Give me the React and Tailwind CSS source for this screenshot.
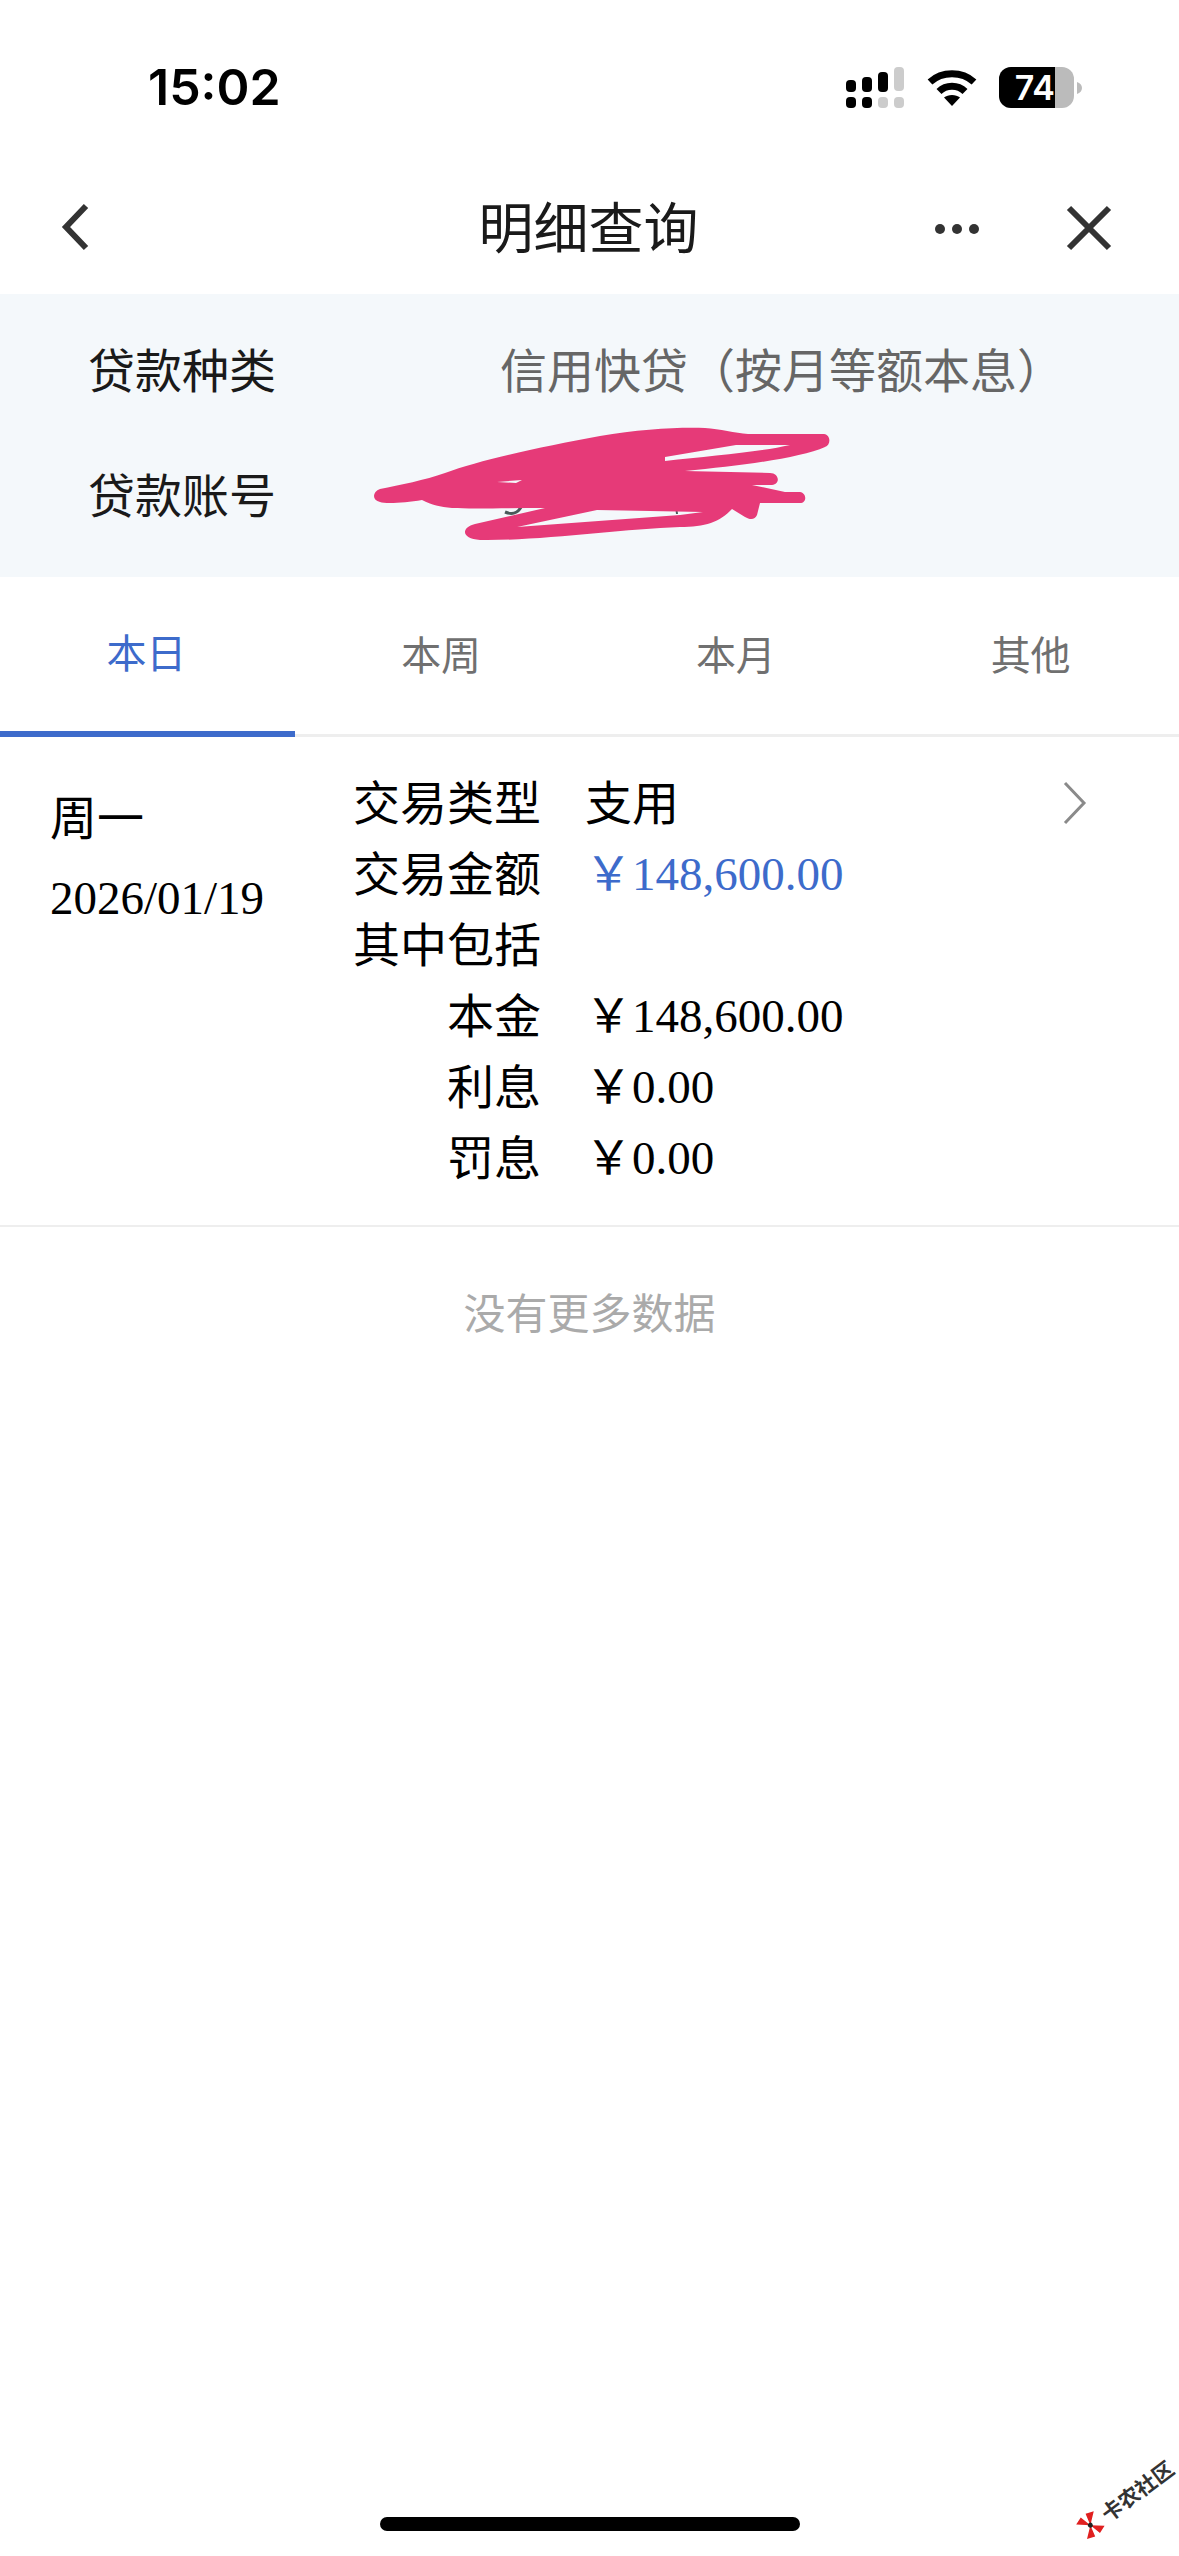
import React from 'react';

const cjk = { fontFamily: '"Noto Sans CJK SC", "Liberation Sans", sans-serif' };
const serif = { fontFamily: '"Liberation Serif", "Noto Sans CJK SC", serif' };

const tabs = ['本日', '本周', '本月', '其他'];

const details = [
  { label: '交易类型', value: '支用', plain: true },
  { label: '交易金额', value: '￥148,600.00', blue: true },
  { label: '其中包括', value: '' },
  { label: '本金', value: '￥148,600.00' },
  { label: '利息', value: '￥0.00' },
  { label: '罚息', value: '￥0.00' },
];

const SignalIcon = () => (
  <svg width="58" height="41" viewBox="0 0 58 41">
    <rect x="0" y="13" width="10" height="12" rx="4" fill="#000" />
    <rect x="16" y="10" width="10" height="15" rx="4" fill="#000" />
    <rect x="32" y="5" width="10" height="20" rx="4" fill="#000" />
    <rect x="48" y="0" width="10" height="24" rx="4" fill="#ccc" />
    <rect x="0" y="30" width="10" height="11" rx="4" fill="#000" />
    <rect x="16" y="30" width="10" height="11" rx="4" fill="#000" />
    <rect x="32" y="30" width="10" height="11" rx="4" fill="#ccc" />
    <rect x="48" y="30" width="10" height="11" rx="4" fill="#ccc" />
  </svg>
);

const WifiIcon = () => (
  <svg width="50" height="37" viewBox="0 0 50 37">
    <path d="M3 13 C15 2 35 2 47 13" fill="none" stroke="#000" strokeWidth="7" />
    <path d="M12 22.5 C19 15.5 31 15.5 38 22.5" fill="none" stroke="#000" strokeWidth="7" />
    <path d="M17 28.5 C21 25 29 25 33 28.5 L25 37 Z" fill="#000" />
  </svg>
);

const Battery = () => (
  <div className="flex items-center">
    <div className="relative w-[75px] h-[41px] rounded-[12px] overflow-hidden bg-[#bbbbbb]">
      <div className="w-[56px] h-full bg-black flex items-center justify-end">
        <span className="text-white text-[34px] font-semibold leading-none" style={{ fontFamily: 'Inter, sans-serif' }}>74</span>
      </div>
    </div>
    <svg className="ml-[3px]" width="5" height="12" viewBox="0 0 5 12">
      <path d="M0 0 C3 1 5 3 5 6 C5 9 3 11 0 12 Z" fill="#bbb" />
    </svg>
  </div>
);

const Scribble = () => (
  <svg className="absolute left-[340px] top-[106px]" width="520" height="160" viewBox="0 0 520 160">
    <path d="M165 112 C172 115 178 113 181 107" fill="none" stroke="#4a5a5a" strokeWidth="3" />
    <path d="M337 114 L336 106" fill="none" stroke="#4a5a5a" strokeWidth="2" />
    <path
      fillRule="evenodd"
      d="M40 89 C60 85 85 80 105 73 C140 60 200 47 260 36 C300 29 340 27 365 28 C380 29 395 33 408 34 L484 34 C491 35 491 45 485 47 C460 58 400 66 345 71 L430 73 C439 73 441 84 432 85 L412 85 L445 92 L460 92 C467 93 467 103 460 103 L420 103 L417 115 C415 120 410 120 405 117 L392 109 C380 122 365 127 340 127 C280 129 200 141 140 140 C122 139 120 128 135 124 L205 108 C170 108 130 109 112 108 C100 107 92 105 82 100 C65 103 45 104 40 102 C32 100 32 92 40 89 Z M325 57 L396 45 L450 45 C420 52 370 56 325 61 Z M157 82 L182 80 L176 83 Z M177 127 L257 110 L363 112 L340 115 Z"
      fill="#e63a78"
    />
  </svg>
);

export default function App() {
  return (
    <div className="relative w-[1179px] h-[2556px] bg-white text-black overflow-hidden flex flex-col" style={cjk}>
      {/* status bar */}
      <div className="h-[164px] shrink-0 flex items-start pt-[67px] pl-[148px]">
        <span className="text-[50px] leading-[40px] font-semibold w-[698px]" style={{ fontFamily: 'Inter, sans-serif' }}>15:02</span>
        <SignalIcon />
        <div className="ml-[23px] mt-[2px]"><WifiIcon /></div>
        <div className="ml-[22px]"><Battery /></div>
      </div>

      {/* nav */}
      <div className="relative h-[130px] shrink-0 flex items-center justify-center">
        <svg className="absolute left-[58px] top-[38px]" width="34" height="50" viewBox="0 0 34 50">
          <path d="M28 4 L8 25 L28 46" fill="none" stroke="#333" strokeWidth="6" />
        </svg>
        <h1 className="text-[55px] font-normal leading-none pb-[10px] mr-[2px] text-[#1a1a1a]">明细查询</h1>
        <div className="absolute left-[935px] top-[60px] flex gap-[7px]">
          <span className="w-[10px] h-[10px] rounded-full bg-[#333]" />
          <span className="w-[10px] h-[10px] rounded-full bg-[#333]" />
          <span className="w-[10px] h-[10px] rounded-full bg-[#333]" />
        </div>
        <svg className="absolute left-[1066px] top-[41px]" width="46" height="46" viewBox="0 0 46 46">
          <path d="M3 3 L43 43 M43 3 L3 43" fill="none" stroke="#333" strokeWidth="6" />
        </svg>
      </div>

      {/* loan info */}
      <div className="relative h-[283px] shrink-0 bg-[#f4f8fb] pt-[12px] pl-[88px]">
        <div className="h-[125px] flex items-center">
          <span className="text-[47px] w-[412px] text-[#1a1a1a]">贷款种类</span>
          <span className="text-[47px] text-[#666666]">信用快贷（按月等额本息）</span>
        </div>
        <div className="h-[125px] flex items-center">
          <span className="text-[47px] text-[#1a1a1a]">贷款账号</span>
        </div>
        <Scribble />
      </div>

      {/* tabs */}
      <div className="grid grid-cols-4 h-[160px] shrink-0">
        {tabs.map((t, i) => (
          <div
            key={t}
            className={
              i === 0
                ? 'flex items-center justify-center text-[40px] text-[#3d6bcb] border-b-[6px] border-[#3d6bcb] pb-[7px] pr-[2px]'
                : 'flex items-center justify-center text-[40px] text-[#707070] border-b-[3px] border-[#eeeeee] pb-[6px] pr-[2px]'
            }
          >
            {t}
          </div>
        ))}
      </div>

      {/* record */}
      <div className="h-[490px] shrink-0 flex border-b-2 border-[#eeeeee]">
        <div className="w-[353px] pl-[50px] pt-[47px]">
          <div className="text-[47px] leading-[62px]">周一</div>
          <div className="text-[47px] leading-[62px] mt-[21px]" style={serif}>2026/01/19</div>
        </div>
        <div className="flex-1 pt-[28px]">
          {details.map((d) => (
            <div key={d.label} className="flex h-[71px] items-center text-[47px]">
              <span className="w-[188px] shrink-0 text-right whitespace-nowrap">{d.label}</span>
              <span
                className={
                  d.plain
                    ? 'ml-[44px]'
                    : d.blue
                      ? 'ml-[44px] pt-[6px] text-[#3d6bcb]'
                      : 'ml-[44px] pt-[6px]'
                }
                style={d.plain ? cjk : serif}
              >
                {d.value}
              </span>
            </div>
          ))}
        </div>
        <svg className="mt-[44px] mr-[92px]" width="24" height="44" viewBox="0 0 24 44">
          <path d="M2 2 L21 22 L2 42" fill="none" stroke="#8a8a8a" strokeWidth="3" />
        </svg>
      </div>

      <div className="h-[170px] shrink-0 flex justify-center pt-[58px] text-[42px] leading-[52px] text-[#aaaaaa]">
        没有更多数据
      </div>

      {/* home indicator */}
      <div className="mt-auto mb-[25px] self-center w-[420px] h-[14px] rounded-full bg-black" />

      {/* watermark */}
      <div className="absolute left-[1080px] top-[2520px] flex items-center gap-[3px] -rotate-[37deg] origin-left whitespace-nowrap">
        <svg width="26" height="26" viewBox="0 0 26 26">
          <path d="M13 13 L2 4 L10 1 Z M13 13 L24 4 L16 1 Z M13 13 L2 22 L10 25 Z M13 13 L24 22 L16 25 Z" fill="#e02020" />
          <circle cx="13" cy="13" r="2.5" fill="#222" />
        </svg>
        <span className="text-[21px] font-bold leading-none text-[#333]">卡农社区</span>
      </div>
    </div>
  );
}
